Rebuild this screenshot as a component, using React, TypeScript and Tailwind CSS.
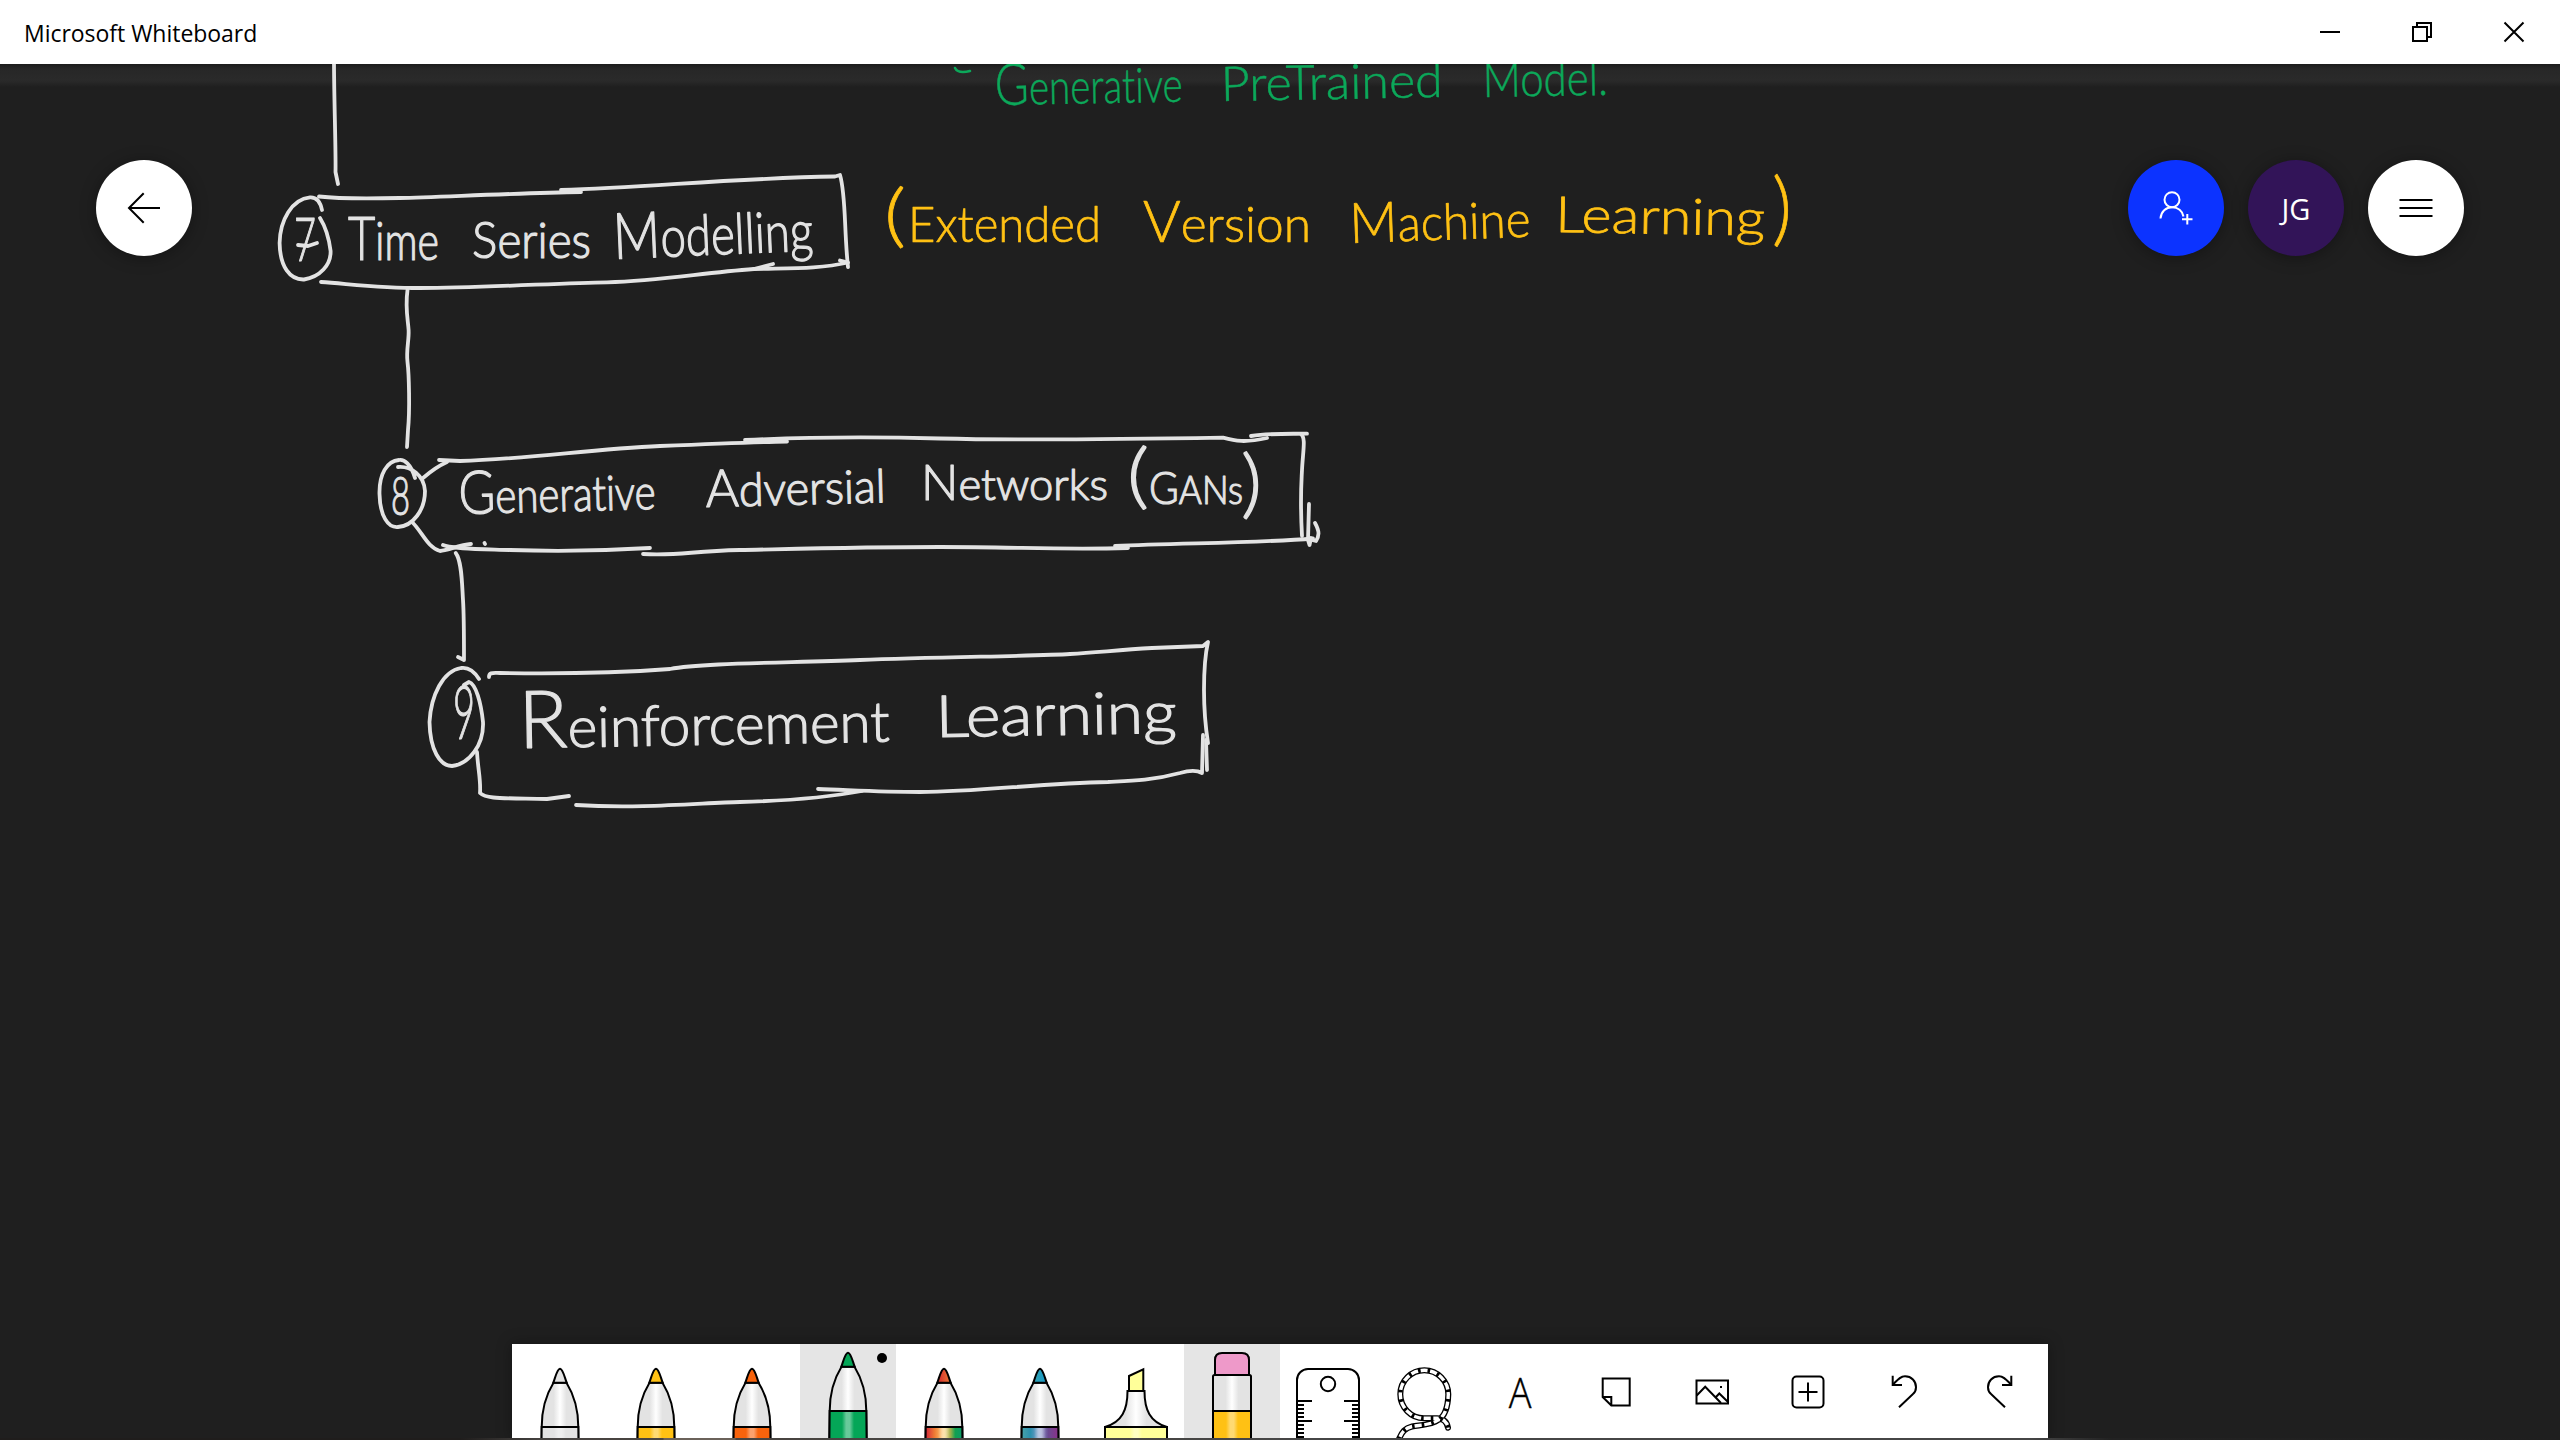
import React from 'react';

type Ink = { t: string; x: number; y: number; w: number; size: number; rot?: number; cap?: number };

const whiteInk: Ink[] = [
  { t: '7', x: 294, y: 261, w: 22, size: 62 },
  { t: 'Time', x: 348, y: 260, w: 91, size: 54, cap: 62 },
  { t: 'Series', x: 472, y: 258, w: 119, size: 50, cap: 52 },
  { t: 'Modelling', x: 614, y: 259, w: 200, size: 56, rot: -2.5, cap: 64 },
  { t: '8', x: 391, y: 515, w: 19, size: 54 },
  { t: 'Generative', x: 459, y: 514, w: 197, size: 48, rot: -1.5, cap: 60 },
  { t: 'Adversial', x: 706, y: 507, w: 180, size: 46, rot: -1.5, cap: 52 },
  { t: 'Networks', x: 921, y: 500, w: 187, size: 44, cap: 50 },
  { t: '(', x: 1127, y: 500, w: 22, size: 70 },
  { t: 'GANs', x: 1149, y: 504, w: 94, size: 40, cap: 46 },
  { t: ')', x: 1241, y: 509, w: 21, size: 74 },
  { t: '9', x: 453, y: 739, w: 22, size: 74 },
  { t: 'Reinforcement', x: 519, y: 748, w: 371, size: 56, rot: -1, cap: 80 },
  { t: 'Learning', x: 936, y: 737, w: 241, size: 58, rot: -1 },
];

const yellowInk: Ink[] = [
  { t: '(', x: 884, y: 239, w: 22, size: 68 },
  { t: 'Extended', x: 908, y: 242, w: 193, size: 50 },
  { t: 'Version', x: 1143, y: 242, w: 168, size: 50, cap: 58 },
  { t: 'Machine', x: 1350, y: 243, w: 181, size: 50, rot: -2, cap: 56 },
  { t: 'Learning', x: 1555, y: 232, w: 210, size: 50, rot: 1 },
  { t: ')', x: 1772, y: 236, w: 20, size: 80 },
];

const greenInk: Ink[] = [
  { t: 'Generative', x: 995, y: 105, w: 188, size: 48, rot: -1, cap: 58 },
  { t: 'PreTrained', x: 1221, y: 101, w: 222, size: 48, rot: -1 },
  { t: 'Model.', x: 1483, y: 97, w: 125, size: 48, rot: -1 },
];

const strokes: string[] = [
  'M334 60 C334 100 336 150 335.500 172 L338 184',
  // first box and its number ring
  'M319 196.500 C340 199 360 199 400 198 S520 193 581 192',
  'M561 190 C650 187 740 178 835 176.500 L840 175 C846 195 844 230 848 267',
  'M321 282 C350 284 380 288 420 288 C480 288 560 283 607 282.300 C660 281 700 273 754 269 L773 264',
  'M754 269 C790 268 820 269 848 262.500 L840 260.500',
  'M322 210 C320 200 315 197 310 197.300 C292 199 280 220 279.600 243 C280 267 290 280 304 279.500 C320 277 331 265 330.600 251 C329 238 325 226 320 218',
  'M298 245 L308 246 L317 243',
  'M407.500 290 C405 308 408 320 408.600 330 S406 350 407.500 362 S410 410 408 430 L407 447',
  // second box and its number ring
  'M415 478 C411 464 404 459 399 460 C387 461 379 474 379.500 494 C380 516 388 528 398 527 C413 526 425 510 425 491 C424 475 411 466 398 467',
  'M423 478 C430 472 438 466 447 462',
  'M439 460 L460 461 C530 459 590 449 660 446 S760 442 787 441.500',
  'M745 440 C810 437 880 437 940 438.500 S1080 440 1223 437.700 C1235 441 1245 443 1267 438',
  'M1251 436 C1270 433 1290 434 1307 433.700',
  'M1301 434 C1306 438 1303 450 1302 470 S1300 500 1302 536',
  'M1309 504 L1308 540 L1309.500 545 L1311 538',
  'M1315 523 C1320 532 1319 536 1316 541 L1308 539',
  'M413 523 C422 532 428 548 440 551 C448 550 460 545 471 544',
  'M443 545 C452 549 480 549 510 550 S600 551 650 548',
  'M643 554 C680 556 690 551 740 550 S860 547 940 547 S1060 550 1128 548',
  'M1115 546 C1180 543 1260 543 1313 538.500',
  'M484.500 543 L485 544',
  'M455.700 553 C462 561 462 585 463 600 S464 640 464 660 L458 657',
  // third box and its number ring
  'M479 679 C474 671 468 667 461 668 C443 671 431 695 429.500 722 C430 750 440 766 452 766 C469 764 484 745 483 722 C481 703 476 684 469 682 L464 685',
  'M489 677 C489 672 493 673 500 673 C560 674 630 672 670 669 C700 663 780 663 860 660 S1040 656 1070 654 S1120 650 1152 648 L1203 646 L1208 642 C1205 655 1204 665 1204 690 S1206 730 1208 743',
  'M1203 735 L1202 773 C1197 770 1190 770 1180 773 C1150 781 1130 781 1108 782 C1040 783 980 792 920 792 C880 792 850 790 818 789',
  'M1206 740 L1207 770',
  'M576 805 C640 809 700 803 740 802 S830 797 862 791',
  'M477 752 C478 770 481 780 480 793 C486 799 500 798 547 799 L569 796',
];

function InkText({ items, color, weight }: { items: Ink[]; color: string; weight: number }) {
  return (
    <g
      fill={color}
      fontFamily="Lato, sans-serif"
      fontWeight={300}
      stroke={color}
      strokeWidth={weight}
      strokeLinejoin="round"
      className="[font-variant-ligatures:none]"
    >
      {items.map((i) => (
        <text
          key={i.t + i.x}
          x={i.x}
          y={i.y}
          fontSize={i.size}
          textLength={i.w}
          lengthAdjust="spacingAndGlyphs"
          transform={i.rot ? `rotate(${i.rot} ${i.x} ${i.y})` : undefined}
        >
          {i.cap ? (
            <>
              <tspan fontSize={i.cap}>{i.t[0]}</tspan>
              {i.t.slice(1)}
            </>
          ) : (
            i.t
          )}
        </text>
      ))}
    </g>
  );
}

function Canvas() {
  return (
    <svg className="absolute left-0 top-0" width={2560} height={1376} viewBox="0 64 2560 1376" fill="none">
      <g stroke="#e3e3e3" strokeWidth={3.8} strokeLinecap="round" strokeLinejoin="round">
        {strokes.map((d) => (
          <path key={d} d={d} />
        ))}
      </g>
      <path d="M955 68 C957 72 962 73 970 71" stroke="#0ca85a" strokeWidth={2.6} strokeLinecap="round" />
      <InkText items={whiteInk} color="#e3e3e3" weight={1.2} />
      <InkText items={yellowInk} color="#ffc114" weight={0.7} />
      <InkText items={greenInk} color="#0ca85a" weight={0.5} />
    </svg>
  );
}

const Icon = ({ children }: { children: React.ReactNode }) => (
  <svg width={96} height={94} viewBox="-48 0 96 94" fill="none" stroke="#000" strokeWidth={2} className="block">
    {children}
  </svg>
);

function Pen({ tip, band, dy = 0 }: { tip: string; band: string; dy?: number }) {
  return (
    <Icon>
      <g transform={`translate(0 ${dy})`}>
        <path d="M-6.500 38.700 C-13.500 50 -18.300 66 -18.300 83 L-18.700 120 L18.700 120 L18.300 83 C18.300 66 13.500 50 6.500 38.700 Z" fill="url(#barrel)" />
        <path d="M-18.300 83 L-18.700 120 L18.700 120 L18.300 83 Z" fill={band} />
        <path d="M-6 84 H6 V120 H-6 Z" fill="url(#shine)" stroke="none" />
        <path d="M-6.700 38.700 C-4.500 33 -3 25 0 24.700 C3 25 4.500 33 6.700 38.700 Z" fill={tip} />
      </g>
    </Icon>
  );
}

function Highlighter() {
  return (
    <Icon>
      <path d="M-7 32 L7.300 25.300 V47 H-7 Z" fill="#ffff99" />
      <path d="M-8.500 47 H8.500 C8.500 66 14 78 31 83 H-31 C-14 78 -8.500 66 -8.500 47 Z" fill="url(#barrel)" />
      <path d="M-31 83 H31 V110 H-31 Z" fill="#ffff99" />
      <path d="M-6 84 H6 V110 H-6 Z" fill="url(#shine)" stroke="none" />
    </Icon>
  );
}

function Eraser() {
  return (
    <Icon>
      <path d="M-17 31 V16 Q-17 9 -10 9 H10 Q17 9 17 16 V31 Z" fill="#ee99c9" />
      <rect x={-19} y={31} width={38} height={80} rx={1.500} fill="url(#barrel)" />
      <path d="M-19 67 H19 V110 H-19 Z" fill="#ffc114" />
      <path d="M-6 68 H6 V110 H-6 Z" fill="url(#shine)" stroke="none" />
    </Icon>
  );
}

function Ruler() {
  const ticks = [57, 61, 65, 69, 73, 77, 81, 85, 89, 93];
  return (
    <Icon>
      <rect x={-31} y={25} width={62} height={90} rx={11} />
      <circle cx={0} cy={40} r={7.200} />
      {ticks.map((y) => {
        const len = y === 57 || y === 77 ? 16 : 8;
        return <path key={y} d={`M-32 ${y} h${len} M32 ${y} h${-len}`} />;
      })}
    </Icon>
  );
}

function Lasso() {
  const loop =
    'M24 83.700 C23 78 19 74.500 13 74.300 L0 74.300 A24 24 0 1 1 24.300 50.300 C24 62 21 72 14.300 76 C8 81 -4 81 -12 82.500 C-19 84 -22 88 -25 95';
  return (
    <Icon>
      <path d={loop} strokeWidth={6} strokeLinecap="round" />
      <path d={loop} stroke="#fff" strokeWidth={3.400} strokeLinecap="round" />
      <path d={loop} strokeWidth={4.500} strokeDasharray="2.600 7.100" />
    </Icon>
  );
}

const Undo = () => (
  <>
    <path d="M-11.300 31.700 V41 H-2" />
    <path d="M-11 40.500 C-6.500 36 -4 32.300 1 32.300 C7.500 32.300 12 37 12 43.300 C12 46.500 11 48.500 8.700 50.300 L-5 63.300" />
  </>
);

const tools: { name: string; active?: boolean; node: React.ReactNode }[] = [
  { name: 'White pen', node: <Pen tip="#e3e3e3" band="#e3e3e3" /> },
  { name: 'Yellow pen', node: <Pen tip="#ffc114" band="#ffc114" /> },
  { name: 'Orange pen', node: <Pen tip="#f8630c" band="#f8630c" /> },
  { name: 'Green pen', active: true, node: <Pen tip="#04a657" band="#04a657" dy={-16} /> },
  { name: 'Rainbow pen', node: <Pen tip="url(#fire)" band="url(#rainbow)" /> },
  { name: 'Galaxy pen', node: <Pen tip="url(#sea)" band="url(#galaxy)" /> },
  { name: 'Highlighter', node: <Highlighter /> },
  { name: 'Eraser', active: true, node: <Eraser /> },
  { name: 'Ruler', node: <Ruler /> },
  { name: 'Lasso', node: <Lasso /> },
  {
    name: 'Text',
    node: (
      <span className="flex h-[94px] w-24 scale-x-90 items-start justify-center pt-[18px] font-['Open_Sans',sans-serif] text-[42px] leading-[60px] font-light text-black [-webkit-text-stroke:0.4px_black]">
        A
      </span>
    ),
  },
  {
    name: 'Note',
    node: (
      <Icon>
        <path d="M-13.300 34.500 H13.700 V61.500 H-4.700 L-13.300 53 Z M-13.300 53 H-4.700 V61.500" />
      </Icon>
    ),
  },
  {
    name: 'Image',
    node: (
      <Icon>
        <rect x={-15.500} y={36.500} width={31.500} height={23} />
        <path d="M-15.300 51.500 L-6.800 42.700 L9 59 M3.500 53.500 L7.300 49.500 L16 58" />
        <path d="M8 43 H10" />
      </Icon>
    ),
  },
  {
    name: 'Insert',
    node: (
      <Icon>
        <rect x={-15.500} y={32.500} width={31} height={31} rx={4} />
        <path d="M-9.500 48 H9.500 M0 38.500 V57.500" />
      </Icon>
    ),
  },
  { name: 'Undo', node: <Icon><Undo /></Icon> },
  { name: 'Redo', node: <Icon><g transform="scale(-1 1)"><Undo /></g></Icon> },
];

function Gradients() {
  const stops = (list: [number, string, number?][]) =>
    list.map(([o, c, a]) => <stop key={o} offset={o} stopColor={c} stopOpacity={a ?? 1} />);
  return (
    <svg width={0} height={0} className="absolute">
      <defs>
        <linearGradient id="barrel">{stops([[0.33, '#e3e3e3'], [0.5, '#ffffff'], [0.67, '#e3e3e3']])}</linearGradient>
        <linearGradient id="shine">{stops([[0, '#fff', 0], [0.35, '#fff', 0.4], [0.65, '#fff', 0.4], [1, '#fff', 0]])}</linearGradient>
        <linearGradient id="fire">{stops([[0.2, '#d8382f'], [1, '#ee7c34']])}</linearGradient>
        <linearGradient id="sea">{stops([[0, '#35a3b0'], [1, '#1598c9']])}</linearGradient>
        <linearGradient id="rainbow">{stops([[0, '#d2213a'], [0.25, '#ee7c34'], [0.5, '#ffd076'], [0.68, '#9ab04a'], [0.8, '#12a050'], [1, '#0b9a6b']])}</linearGradient>
        <linearGradient id="galaxy">{stops([[0, '#4aa3a8'], [0.25, '#2b8fae'], [0.5, '#8f9fd0'], [0.72, '#6a4a92'], [1, '#8c2f88']])}</linearGradient>
      </defs>
    </svg>
  );
}

const round = 'flex size-24 items-center justify-center rounded-full shadow-[0_2px_16px_rgba(0,0,0,0.35)]';

export default function App() {
  return (
    <div className="flex h-[1440px] w-[2560px] flex-col overflow-hidden bg-[#1f1f1f] font-['Open_Sans',sans-serif]">
      <Gradients />
      <header className="flex h-16 shrink-0 items-center justify-between bg-white pl-6">
        <h1 className="pt-[3px] text-[23px] tracking-[-0.03px] text-black">Microsoft Whiteboard</h1>
        <div className="flex h-16 text-black">
          {[
            <path key="m" d="M36 32 H56" />,
            <path key="r" d="M37 27 H51 V41 H37 Z M41 27 V23 H55 V37 H51" />,
            <path key="c" d="M36.500 22.500 L55.500 41.500 M55.500 22.500 L36.500 41.500" />,
          ].map((p, i) => (
            <svg key={i} width={92} height={64} fill="none" stroke="#000" strokeWidth={2}>
              {p}
            </svg>
          ))}
        </div>
      </header>

      <main className="relative flex grow flex-col">
        <div className="absolute inset-x-0 top-0 h-6 bg-[linear-gradient(#1c1c1c_0px,#272727_5px,#2a2a2a_16px,#282828_18px,#1f1f1f_23px)]" />
        <Canvas />

        <div className="relative flex justify-between px-24 pt-24">
          <button className={round + ' bg-white'}>
            <svg width={96} height={96} fill="none" stroke="#000" strokeWidth={2}>
              <path d="M33 48 H64 M47.700 33.300 L33 48 L47.700 62.700" />
            </svg>
          </button>
          <div className="flex gap-6">
            <button className={round + ' bg-[#0c33ff]'}>
              <svg width={96} height={96} fill="none" stroke="#fff" strokeWidth={2}>
                <circle cx={44} cy={39.700} r={7.500} />
                <path d="M32.500 58.500 C33 51.500 38 47.300 44 47.300 C50 47.300 54.500 51 55.500 56.500 M54 59.300 H64.500 M59.300 54 V64.500" />
              </svg>
            </button>
            <button className={round + ' bg-[#321458] pt-0.5 text-[29px] text-white'}>JG</button>
            <button className={round + ' bg-white'}>
              <svg width={96} height={96} fill="none" stroke="#000" strokeWidth={2}>
                <path d="M31.500 40 H64.500 M31.500 48 H64.500 M31.500 56 H64.500" />
              </svg>
            </button>
          </div>
        </div>

        <div className="relative mt-auto flex justify-center">
          <nav className="flex h-[94px] bg-white shadow-[0_0_14px_rgba(0,0,0,0.35)]">
            {tools.map((t, i) => (
              <button key={t.name} aria-label={t.name} className={'relative h-[94px] w-24 overflow-hidden ' + (t.active ? 'bg-[#e5e5e5]' : 'bg-white')}>
                {t.node}
                {i === 3 && <span className="absolute top-[9px] right-[9px] size-2.5 rounded-full bg-black" />}
              </button>
            ))}
          </nav>
        </div>
        <div className="relative h-0.5 shrink-0 bg-[linear-gradient(90deg,#1f1d1c_0px,#1f1d1c_460px,#454240_540px,#4a4541_663px,#6b625a_664px,#6b625a_735px,#484440_736px,#464646_1300px,#464646_2030px,#222_2110px,#1f1f1f_2560px)]" />
      </main>
    </div>
  );
}
